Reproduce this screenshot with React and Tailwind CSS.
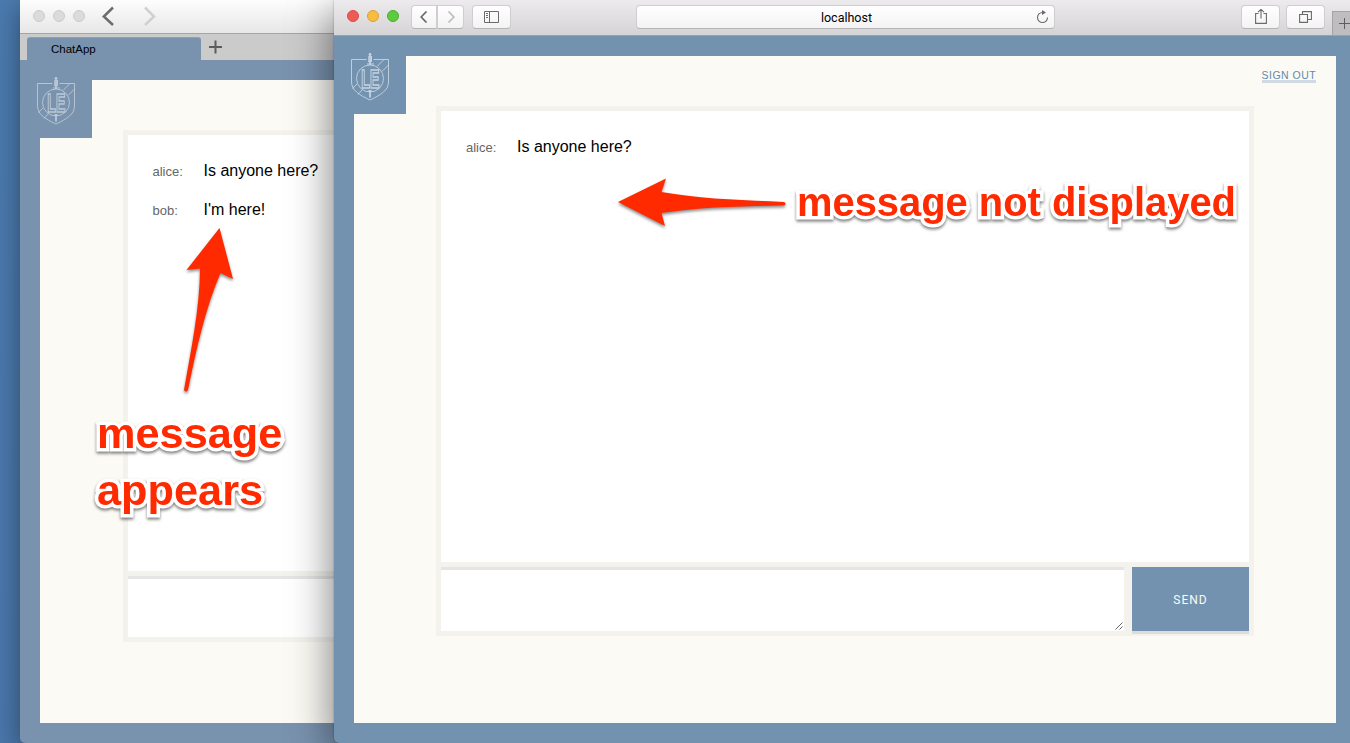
import React from "react";

function Crest({ className }) {
  return (
    <svg className={"overflow-visible " + className} width="40" height="50" viewBox="0 0 40 50" fill="none" stroke="#fff" strokeWidth="0.9">
      <path d="M16.500 7.500H1.500V30C1.500 38 9 43 20 48C31 43 38.500 38 38.500 30V7.500H23.500" />
      <circle cx="20" cy="26.500" r="13.500" />
      <path d="M27 14.500L33.500 8M32 19.500L38.500 13M7 32L2.500 36.500M12.500 37.500L8 42.500" />
      <path d="M20 1V13" strokeWidth="1.800" />
      <path d="M18.500 2.500H21.500M18 9.500H22M17 12H24M18.800 4V10M21.500 4V10" strokeWidth="1" />
      <path d="M18.500 39H21.500M20 39V45.500" strokeWidth="1.800" />
      <text transform="translate(11.2 35.500) scale(0.56 1)" fontFamily="Liberation Sans, sans-serif" fontWeight="700" fontSize="25.500" strokeWidth="1.500">LE</text>
    </svg>
  );
}

function Message({ name, children }) {
  return (
    <div className="flex h-[39px] items-baseline leading-[20px]">
      <span className="w-[51px] shrink-0 text-[13px] text-[#666]">{name}:</span>
      <span className="whitespace-nowrap text-[16px] text-black">{children}</span>
    </div>
  );
}

function ToolButton({ className = "", children }) {
  return (
    <div className={"flex h-[24px] items-center justify-center rounded-[4px] border border-[#cfcdd0] border-b-[#b5b3b6] bg-gradient-to-b from-white to-[#f3f3f3] text-[#6b6b6b] " + className}>
      {children}
    </div>
  );
}

function BackWindow() {
  return (
    <div className="absolute top-0 left-[20px] flex h-[743px] w-[900px] flex-col overflow-hidden rounded-bl-[5px] bg-[#7992ae] shadow-[0_8px_26px_rgba(0,0,0,0.4)]">
      <div className="flex h-[34px] shrink-0 items-center border-b border-[#a5a5a5] bg-gradient-to-b from-[#fdfdfd] to-[#e7e7e7] pb-[1px] pl-[13px]">
        <div className="flex gap-[8px]">
          <i className="size-[12px] rounded-full border border-[#cbcbcb] bg-[#dbdbdb]" />
          <i className="size-[12px] rounded-full border border-[#cbcbcb] bg-[#dbdbdb]" />
          <i className="size-[12px] rounded-full border border-[#cbcbcb] bg-[#dbdbdb]" />
        </div>
        <svg className="ml-[17px]" width="56" height="20" fill="none" strokeWidth="2.500">
          <path d="M11 1.500L1.800 10.500L11 19" stroke="#6c6c6c" />
          <path d="M43 1.500L52 10.500L43 19" stroke="#d0d0d0" />
        </svg>
      </div>
      <div className="flex h-[26px] shrink-0 items-end bg-[#cbcbcb] pl-[7px]">
        <div className="flex h-[23px] w-[174px] items-center rounded-t-[3px] border-t border-[#8fa0b4] bg-[#7992ae] pt-[1px] pl-[24px] text-[11.500px] text-black">ChatApp</div>
        <svg className="mb-[5px] ml-[7px]" width="15" height="15" stroke="#5c5c5c" strokeWidth="2"><path d="M7.500 0.500V13.500M1 7H14" /></svg>
      </div>
      <div className="mt-[20px] ml-[20px] flex h-[643px] shrink-0 items-start bg-[#fbfaf5]">
        <div className="h-[58px] w-[52px] shrink-0 bg-[#7992ae]">
          <Crest className="-mt-[4px] -ml-[4px] opacity-50" />
        </div>
        <div className="mt-[50px] ml-[31px] w-[700px] shrink-0 border-[5px] border-[#f3f2ed]">
          <div className="h-[436px] bg-white pt-[26px] pl-[24.500px]">
            <Message name="alice">Is anyone here?</Message>
            <Message name="bob">I'm here!</Message>
          </div>
          <div className="h-[5px] bg-[#f3f2ed]" />
          <div className="h-[61px] border-t-[3px] border-[#e5e5e5] bg-white" />
        </div>
      </div>
    </div>
  );
}

function FrontWindow() {
  return (
    <div className="absolute top-0 left-[334px] flex h-[743px] w-[1050px] flex-col overflow-hidden rounded-bl-[5px] bg-[#7292b0] shadow-[0_12px_44px_rgba(0,0,0,0.55),0_0_2px_rgba(0,0,0,0.35)]">
      <div className="flex h-[36px] shrink-0 items-start border-b border-[#a19fa1] bg-gradient-to-b from-[#edebee] to-[#d5d3d5] pt-[5px] pl-[13px]">
        <div className="mt-[5px] flex gap-[8px]">
          <i className="size-[12px] rounded-full border border-[#dc4c46] bg-[#ee5a55]" />
          <i className="size-[12px] rounded-full border border-[#dda035] bg-[#f7bd3f]" />
          <i className="size-[12px] rounded-full border border-[#4aad2e] bg-[#5ecb3f]" />
        </div>
        <ToolButton className="ml-[12px] w-[26px] rounded-r-none">
          <svg width="8" height="12" fill="none" stroke="currentColor" strokeWidth="1.700"><path d="M6.500 0.500L1.200 6L6.500 11.500" /></svg>
        </ToolButton>
        <ToolButton className="w-[27px] rounded-l-none !text-[#bebebe]">
          <svg width="8" height="12" fill="none" stroke="currentColor" strokeWidth="1.700"><path d="M1.500 0.500L6.800 6L1.500 11.500" /></svg>
        </ToolButton>
        <ToolButton className="ml-[8px] w-[39px]">
          <svg width="15" height="12" fill="none" stroke="currentColor"><path d="M0.500 0.500H14.500V11.500H0.500ZM5.500 0.500V11.500M2 2.500H4M2 4.500H4M2 6.500H4" /></svg>
        </ToolButton>
        <ToolButton className="relative ml-[125px] w-[419px]">
          <span className="pt-[2px] pl-[2px] font-[Roboto,sans-serif] text-[12.500px] text-black">localhost</span>
          <svg className="absolute top-[4px] right-[5px]" width="13" height="14" fill="none" stroke="currentColor" strokeWidth="1.100"><path d="M6.500 2.500A5 5 0 1 0 11.500 7.500" /><path d="M6 0L10 2.500L6 5Z" fill="currentColor" stroke="none" /></svg>
        </ToolButton>
        <ToolButton className="ml-[186px] w-[39px]">
          <svg width="12" height="16" fill="none" stroke="currentColor" strokeWidth="1.100"><path d="M3.500 4.500H0.600V14.400H11.400V4.500H8.500M6 9.500V0.800M3 3.200L6 0.400L9 3.200" /></svg>
        </ToolButton>
        <ToolButton className="ml-[6px] w-[39px]">
          <svg width="13" height="12" fill="none" stroke="currentColor" strokeWidth="1.100"><path d="M0.600 3.500H8.500V11.400H0.600ZM3.500 3V0.600H12.400V8.500H9" /></svg>
        </ToolButton>
        <div className="mt-[6px] ml-[7px] h-[24px] w-[40px] shrink-0 border-t border-l border-[#a5a3a5] bg-[#bfbdc0] pt-[6px] pl-[6px]">
          <svg width="12" height="12" stroke="#5f5f5f"><path d="M5.500 0V11M0 5.500H11" /></svg>
        </div>
      </div>
      <div className="mt-[20px] ml-[20px] flex h-[667px] w-[982px] shrink-0 items-start bg-[#fbfaf5]">
        <div className="h-[58px] w-[52px] shrink-0 bg-[#7292b0]">
          <Crest className="-mt-[4px] -ml-[4px] opacity-60" />
        </div>
        <div className="mt-[50px] ml-[30px] w-[818px] shrink-0 border-[5px] border-[#f3f2ed] bg-[#f3f2ed]">
          <div className="h-[451px] bg-white pt-[26px] pl-[25px]">
            <Message name="alice">Is anyone here?</Message>
          </div>
          <div className="mt-[5px] flex h-[64px] gap-[8px]">
            <div className="flex grow items-end justify-end border-t-[3px] border-[#e5e5e5] bg-white pr-[1px] pb-[1px]">
              <svg width="8" height="8" stroke="#555" strokeWidth="0.900"><path d="M0.500 7.500L7.500 0.500M4.500 7.500L7.500 4.500" /></svg>
            </div>
            <div className="flex w-[117px] items-center justify-center bg-[#7292b0] pt-[2px] font-[Roboto,sans-serif] text-[12px] tracking-[1px] text-[#fbfaf5] shadow-[0_3px_0_#dddcd8]">SEND</div>
          </div>
        </div>
        <div className="mt-[14px] ml-[8px] h-[13px] w-[54px] shrink-0 border-b-[3px] border-[#d0dae2] text-[10.500px] leading-[11px] tracking-[0.500px] whitespace-nowrap text-[#6488aa] [text-indent:-0.5px]">SIGN OUT</div>
      </div>
    </div>
  );
}

const noteText =
  "absolute font-bold whitespace-nowrap text-[#ff2a00] [-webkit-text-stroke:7px_white] [paint-order:stroke_fill] [stroke-linejoin:round] drop-shadow-[0_2px_1.5px_rgba(0,0,0,0.5)]";

export default function App() {
  return (
    <div className="relative h-[743px] w-[1350px] overflow-hidden bg-gradient-to-b from-[#4a7aae] to-[#4a76aa] font-['Liberation_Sans',Arial,sans-serif]">
      <BackWindow />
      <FrontWindow />
      <svg className="pointer-events-none absolute top-0 left-0 drop-shadow-[0_2px_1.5px_rgba(0,0,0,0.45)]" width="1350" height="743" fill="#ff2a00">
        <path d="M219.500 228L233 279L220.500 273C205 309 196 351 188 390Q186 393 184 390C191 351 200 306 200 268.500L186.500 270Z" />
        <path d="M618 202L666 178.500L661.500 192C700 199 742 200 784 202Q787 203.500 784 205.500C742 206 700 207 661.500 213L665 226Z" />
      </svg>
      <div className={noteText + " top-[405px] left-[97px] text-[43.300px] leading-[57px]"}>message<br />appears</div>
      <div className={noteText + " top-[178px] left-[797px] text-[39.900px] leading-[48px]"}>message not displayed</div>
    </div>
  );
}
